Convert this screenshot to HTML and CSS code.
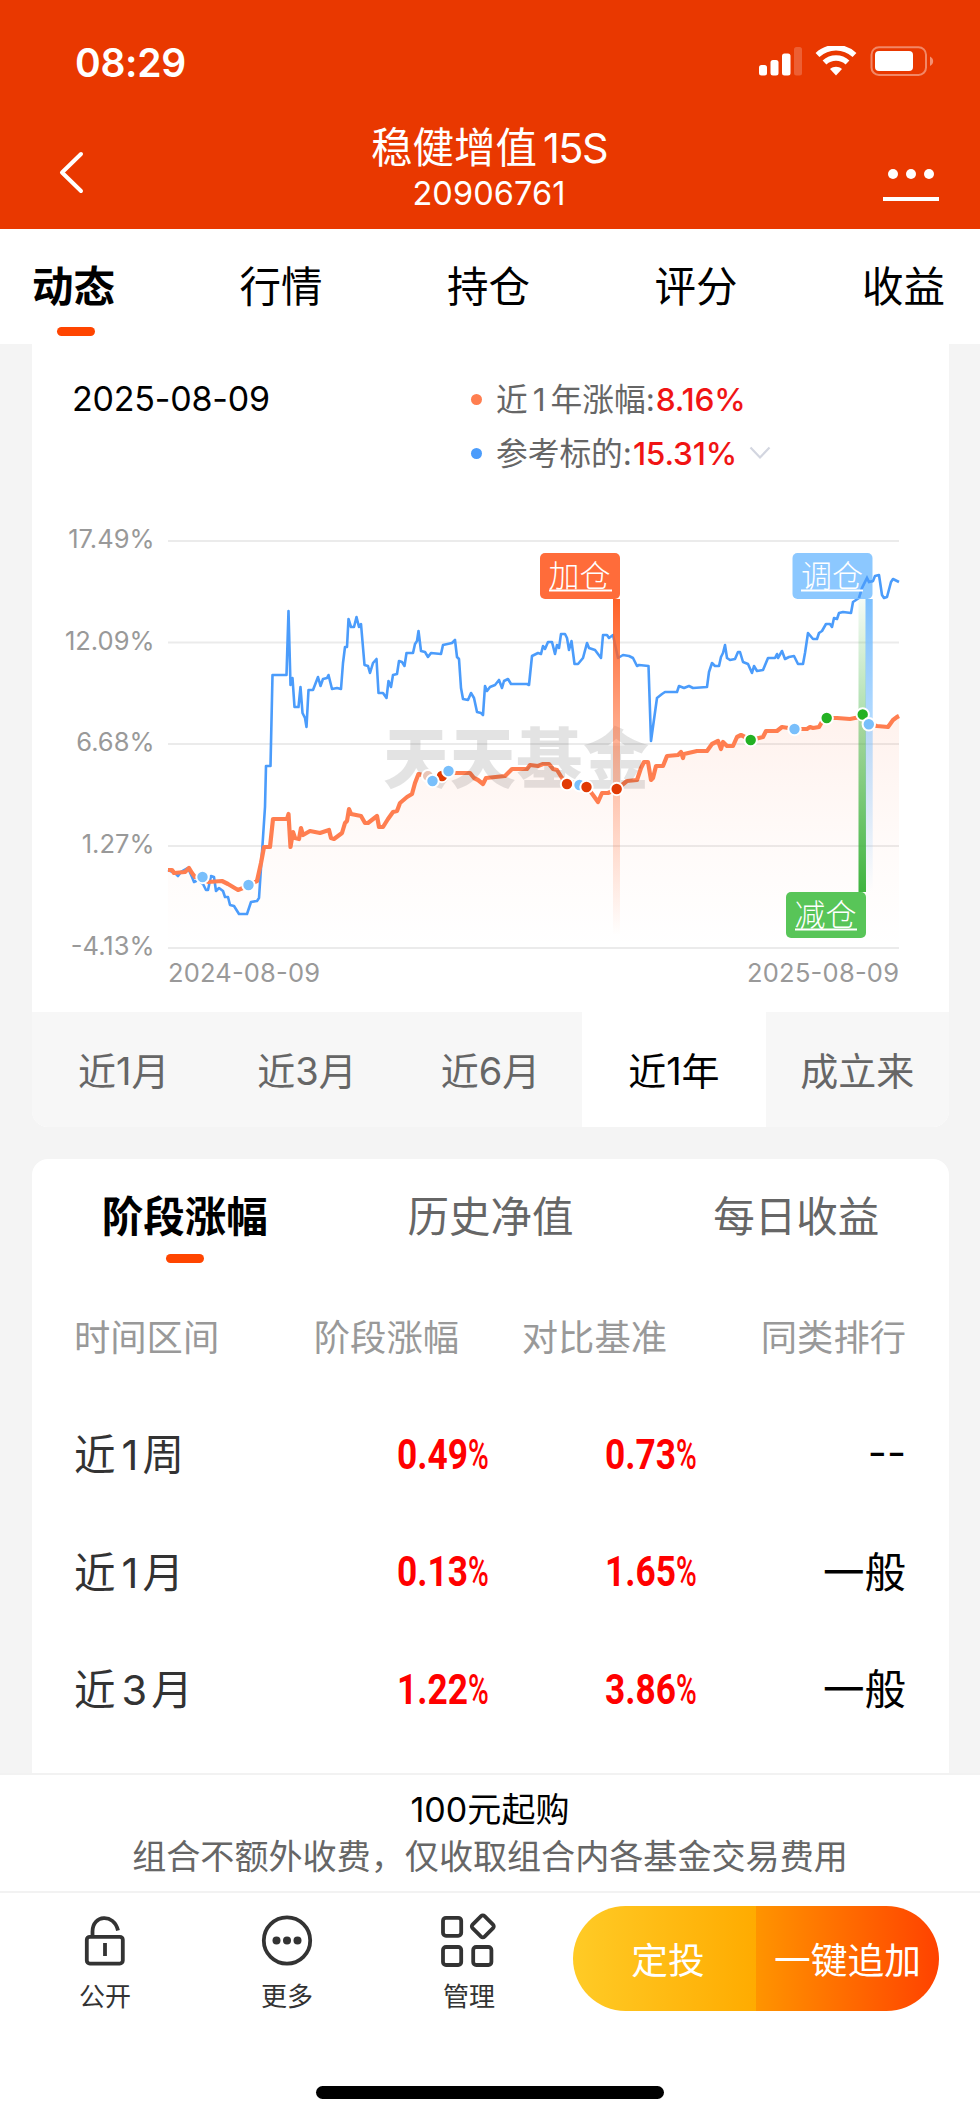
FILE: index.html
```
<!DOCTYPE html>
<html lang="zh-CN">
  <head>
    <meta charset="UTF-8" />
    <meta name="viewport" content="width=device-width, initial-scale=1.0" />
    <title>稳健增值15S</title>
    <link rel="stylesheet" href="styles.css">
  </head>
  <body>
    <header class="header">
      <div class="status-bar">
        <span class="time">08:29</span>
        <svg class="status-icons" width="176" height="32" viewBox="0 0 176 32" fill="#fff">
          <rect x="0" y="19" width="8" height="10.500" rx="2.500" />
          <rect x="11.500" y="14" width="8" height="15.500" rx="2.500" />
          <rect x="23" y="7.500" width="8.500" height="22" rx="2.500" />
          <rect x="35" y="1" width="8" height="28.500" rx="2.500" opacity="0.2" />
          <g fill="none" stroke="#fff" stroke-width="5.600">
            <path d="M58.500 9 C69 -0.800 85 -0.800 95.500 9" />
            <path d="M65.500 16.500 C72 10.500 82 10.500 88.500 16.500" />
          </g>
          <path d="M71 23 C74.500 20 79.500 20 83 23 L77 29.500 Z" />
          <rect x="112.500" y="1.200" width="54.500" height="27.800" rx="7.500" fill="none" stroke="#fff" stroke-width="2" opacity="0.4" />
          <rect x="116" y="5" width="38" height="20" rx="4" />
          <path d="M171 10.500 C175.200 12.500 175.200 18 171 20 Z" opacity="0.45" />
        </svg>
      </div>
      <div class="nav-bar">
        <svg class="back" width="30" height="48" viewBox="0 0 30 48">
          <path d="M27 6 L8 24.500 L27 43" fill="none" stroke="#fff" stroke-width="4" stroke-linecap="round" stroke-linejoin="round" />
        </svg>
        <div class="nav-title">
          <h1>稳健增值<span class="title-num">15S</span></h1>
          <p>20906761</p>
        </div>
        <div class="menu">
          <div class="menu-dots"><i></i><i></i><i></i></div>
        </div>
      </div>
    </header>

    <nav class="tabs">
      <a class="tab active">动态</a>
      <a class="tab">行情</a>
      <a class="tab">持仓</a>
      <a class="tab">评分</a>
      <a class="tab">收益</a>
    </nav>

    <main class="content">
      <section class="chart-card">
        <div class="chart-head">
          <div class="chart-date">2025-08-09</div>
          <div class="legend">
            <div class="legend-row">
              <i class="dot orange"></i>
              <span class="legend-text">近<span class="num">1</span>年涨幅:<b>8.16%</b></span>
            </div>
            <div class="legend-row">
              <i class="dot blue"></i>
              <span class="legend-text">参考标的:<b>15.31%</b></span>
              <svg class="chevron" width="22" height="14" viewBox="0 0 22 14">
                <path d="M1.500 1.500 L11 11.500 L20.500 1.500" fill="none" stroke="#d3d6e0" stroke-width="2.200" />
              </svg>
            </div>
          </div>
        </div>

        <svg class="chart" width="916" height="500" viewBox="32 512 916 500">
          <defs>
            <linearGradient id="area" gradientUnits="userSpaceOnUse" x1="0" y1="715" x2="0" y2="948">
              <stop offset="0" stop-color="#ff7e50" stop-opacity="0.1" />
              <stop offset="0.550" stop-color="#ff7e50" stop-opacity="0.035" />
              <stop offset="1" stop-color="#ff7e50" stop-opacity="0" />
            </linearGradient>
            <linearGradient id="poleRed" x1="0" y1="0" x2="0" y2="1">
              <stop offset="0" stop-color="#ff6127" />
              <stop offset="0.500" stop-color="#ff6127" stop-opacity="0.4" />
              <stop offset="1" stop-color="#ff6127" stop-opacity="0" />
            </linearGradient>
            <linearGradient id="poleBlue" x1="0" y1="0" x2="0" y2="1">
              <stop offset="0" stop-color="#7cc0ff" />
              <stop offset="1" stop-color="#7cc0ff" stop-opacity="0" />
            </linearGradient>
            <linearGradient id="poleGreen" x1="0" y1="0" x2="0" y2="1">
              <stop offset="0" stop-color="#3fb43f" stop-opacity="0.050" />
              <stop offset="1" stop-color="#3fb43f" />
            </linearGradient>
          </defs>

          <!-- rejilla -->
          <g stroke="#ebebeb" stroke-width="2">
            <path d="M168 541H899M168 642.500H899M168 744H899M168 846H899M168 948H899" />
          </g>
          <g class="axis" text-anchor="end">
            <text x="154.500" y="548">17.49%</text>
            <text x="154.500" y="649.500">12.09%</text>
            <text x="154.500" y="751">6.68%</text>
            <text x="154.500" y="853">1.27%</text>
            <text x="154.500" y="955">-4.13%</text>
          </g>
          <g class="axis">
            <text x="168" y="982" textLength="152">2024-08-09</text>
            <text x="747" y="982" textLength="152">2025-08-09</text>
          </g>

          <path fill="url(#area)" d="M168 870 L174 873 185 872 189 868 195 877 202 877 208 882 222 881 238 890 248 885 257 881 264 847 270 847 273 819 288 816 291 847 299 839 310 831 329 830 334 839 342 833 349 809 361 816 368 823 377 816 379 827 388 819 400 802 412 794 418 774 432 780 448 772 470 773 483 784 486 778 505 776 512 769 527 769 543 764 557 770 567 783 587 787 598 802 602 793 617 789 637 780 644 762 648 762 651 780 656 766 663 766 667 756 697 751 707 751 718 741 723 742 733 746 741 735 751 740 766 731 782 727 795 729 819 727 827 718 850 719 863 714 869 724 888 727 899 716 V948 H168 Z" />

          <polyline fill="none" stroke="#4b9cfb" stroke-width="2.600" stroke-linejoin="round" points="168,870 175,873 178,876 181,872 188,868 192,877 194,882 198,880 203,884 206,890 208,890 211,876 214,877 216,891 219,888 223,891 225,897 228,897 230,905 234,906 239,914 247,914 251,902 257,901 259,898 265,807 266,766 270.500,766 272.500,675 286.500,675 288.500,611 290.500,685 292.500,678 294.500,707 298.500,707 300.500,687 302.500,713 305,718 306.500,727 308.500,690 313,690 318,677 320.500,686 323,679 327,678 328.500,675 332,689 337,688 341,689 343,663 345,647 347,647 348.500,619 351,627 354,627 356.500,617 359,627 361,624 364.500,665 368,666 370,673 373,663 376.500,659 378.500,693 383,693 386.500,698 388.500,681 391,687 393,675 397,674 399,661 402,662 404.500,666 406.500,653 413,653 415,644 417,641 418.500,631 421,651 425,652 428,657 431,653 441,654 443,645 452,643 455,640 457,657 459,659 461,688 463,699 468,700 471,693 474,698 477,712 481,713 483,715 485,686 487,691 490,687 495,685 499,680 502,688 504,681 508,679 511,684 527,684 529,685 532,656 538,653 541,654 543,646 545,649 548,642 552,642 555,654 557,645 559,648 561,634 565,634 567,638 569,650 571.500,641 574.500,664 578,664 583,658 587,643 589,648 595,650 601,658 603,635 607,635 609,638 613,635 618,658 623,655 629,656 633,658 637,666 639,665 648.500,666 651,741 657,698 662,694 665,692 677,692 679,686 684,688 689,686 693,688 707,687 709,672 712,663 715,666 719,666 721,657 723,653 725,645 727,658 730,660 735,659 738,652 740,652 743,662 748,664 752,673 754,666 757,671 763,670 768,658 775,658 777,654 778,658 782,651 785,659 789,657 794,656 798,664 803,664 805,653 808,633 813,639 817,639 819,633 822,631 826,624 830,624 832,627 834,618 837,619 839,613 843,612 851,613 853,602 859,598 862,588 867,578 869,582 873,581 875,576 879,575 882,595 884,598 887,597 891,582 893,579 899,582" />

          <polyline fill="none" stroke="#ff7e50" stroke-width="4.200" stroke-linejoin="round" points="168,870 172,870 174,873 185,872 189,868 192,873 195,877 202,877 208,882 222,881 228,884 238,890 243,888 248,885 257,881 261,863 264,847 270,847 273,819 287,819 288.500,814 290.500,847 293,832 295,838 299,839 301,828 303,835 310,831 320,833 329,830 331,838 334,839 342,833 345,823 347,821 349,809 351,814 361,816 365,823 368,823 377,816 379,827 383,827 388,819 393,812 397,811 400,803 407,797 412,794 415,783 418.500,774 423,775 432,780 442,776 448,772 455,773 470,773 474,778 478,780 483,784 486,778 505,776 512,769 527,769 530,765 538,766 543,764 549,764 553,769 557,770 562,778 567,783 580,785 587,787 593,795 598,802 602,793 608,793 617,789 627,781 637,780 641,768 644,762 648,762 651,780 653,778 656,766 663,766 667,756 678,755 681,752 683,758 684,754 697,751 707,751 712,744 718,741 721,749 723,742 727,746 733,746 737,737 741,735 751,740 763,737 766,731 777,731 782,727 795,729 807,729 810,727 813,728 819,727 823,720 827,718 837,718 850,719 860,717 863,714 869,724 877,726 888,727 893,720 897,717 899,716" />

          <text class="watermark" x="383" y="783" textLength="266">天天基金</text>

          <rect x="613" y="599" width="7" height="336" fill="url(#poleRed)" />
          <rect x="858.500" y="599" width="7.500" height="293" fill="url(#poleGreen)" />
          <rect x="865.500" y="599" width="7.200" height="293" fill="url(#poleBlue)" />

          <g stroke="#fff" stroke-width="2">
            <circle cx="428" cy="776" r="6" fill="#e9c6b8" />
            <g fill="#e13a04">
              <circle cx="442" cy="776" r="6.200" />
              <circle cx="567" cy="784" r="6.200" />
            </g>
            <g fill="#79bffb">
              <circle cx="202.500" cy="877" r="6.200" />
              <circle cx="248.500" cy="885" r="6.200" />
              <circle cx="432.500" cy="781" r="6.200" />
              <circle cx="448.500" cy="771" r="6.200" />
              <circle cx="579.500" cy="785" r="6.200" />
              <circle cx="794.500" cy="729" r="6.200" />
            </g>
            <g fill="#e13a04">
              <circle cx="586.500" cy="787" r="6.200" />
              <circle cx="616.700" cy="789" r="6.200" />
            </g>
            <g fill="#23b123">
              <circle cx="750.700" cy="740" r="6.200" />
              <circle cx="826.700" cy="718" r="6.200" />
              <circle cx="862.700" cy="714.500" r="6.200" />
            </g>
            <circle cx="868.800" cy="724.300" r="6.200" fill="#79bffb" />
          </g>

          <rect x="540" y="553" width="80" height="46" rx="5" fill="#ff6c3a" />
          <rect x="792.500" y="553" width="80" height="46" rx="5" fill="#7cc0ff" fill-opacity="0.880" />
          <rect x="786" y="892" width="80" height="46" rx="5" fill="#58c558" />
          <path d="M859 598 L862 588 867 578 869 582 873 581" fill="none" stroke="#4b9cfb" stroke-width="2.600" />
          <g class="flag-text">
            <text x="548.500" y="587">加仓</text>
            <text x="801" y="587">调仓</text>
            <text x="794.500" y="926">减仓</text>
          </g>
          <path d="M549 590.500H612M801 590.500H863M795 929.500H857" stroke="#fff" stroke-width="2" />
        </svg>

        <div class="ranges">
          <a>近1月</a>
          <a>近3月</a>
          <a>近6月</a>
          <a class="active">近1年</a>
          <a>成立来</a>
        </div>
      </section>

      <section class="table-card">
        <div class="sub-tabs">
          <a class="active">阶段涨幅</a>
          <a>历史净值</a>
          <a>每日收益</a>
        </div>
        <div class="row head">
          <span>时间区间</span><span>阶段涨幅</span><span>对比基准</span><span>同类排行</span>
        </div>
        <div class="row">
          <span class="period">近<span class="num">1</span>周</span>
          <span class="rate">0.49<i>%</i></span>
          <span class="rate">0.73<i>%</i></span>
          <span class="rank">--</span>
        </div>
        <div class="row">
          <span class="period">近<span class="num">1</span>月</span>
          <span class="rate">0.13<i>%</i></span>
          <span class="rate">1.65<i>%</i></span>
          <span class="rank">一般</span>
        </div>
        <div class="row">
          <span class="period">近<span class="num">3</span>月</span>
          <span class="rate">1.22<i>%</i></span>
          <span class="rate">3.86<i>%</i></span>
          <span class="rank">一般</span>
        </div>
      </section>
    </main>

    <footer class="footer">
      <div class="notice">
        <p class="notice-main">100元起购</p>
        <p>组合不额外收费，仅收取组合内各基金交易费用</p>
      </div>
      <div class="actions">
        <a class="action">
          <svg width="60" height="60" viewBox="0 0 60 60" fill="none" stroke="#333" stroke-width="3.800">
            <rect x="11.800" y="27.800" width="36" height="26.800" rx="3" />
            <path d="M17.500 28 V22.500 C17.500 5.500 39 4 43 21.500" />
            <path d="M30 34 V47" />
          </svg>
          <span>公开</span>
        </a>
        <a class="action">
          <svg width="60" height="60" viewBox="0 0 60 60" fill="none" stroke="#333" stroke-width="3.800">
            <circle cx="30" cy="31.500" r="23.200" />
            <g fill="#333" stroke="none">
              <circle cx="19.500" cy="31.500" r="4" />
              <circle cx="30" cy="31.500" r="4" />
              <circle cx="40.500" cy="31.500" r="4" />
            </g>
          </svg>
          <span>更多</span>
        </a>
        <a class="action">
          <svg width="60" height="60" viewBox="0 0 60 60" fill="none" stroke="#333" stroke-width="3.800">
            <rect x="4" y="8.800" width="18.200" height="18" rx="3" />
            <rect x="4" y="38" width="18.200" height="18" rx="3" />
            <rect x="34.200" y="38" width="18.200" height="18" rx="3" />
            <rect x="35.300" y="8.800" width="17" height="17" rx="2.500" transform="rotate(45 43.800 17.300)" />
          </svg>
          <span>管理</span>
        </a>
        <div class="buttons">
          <button class="btn-plan">定投</button>
          <button class="btn-add">一键追加</button>
        </div>
      </div>
      <div class="home-bar"></div>
    </footer>
  </body>
</html>
```

FILE: styles.css
```
* {
  box-sizing: border-box;
}

body {
  width: 980px;
  height: 2120px;
  margin: 0;
  overflow: hidden;
  display: flex;
  flex-direction: column;
  background-color: #f4f4f4;
  color: #000;
  font-family: "Inter", "Noto Sans CJK SC", sans-serif;
}

h1,
p {
  margin: 0;
  font-weight: 400;
}

i {
  font-style: normal;
}

/* Header */
.header {
  height: 229px;
  background-color: #e93800;
  color: #fff;
}

.status-bar {
  display: flex;
  justify-content: space-between;
  align-items: center;
  height: 124px;
  padding: 0 46px 0 75px;
}

.time {
  font-size: 39px;
  font-weight: 600;
  letter-spacing: -0.3px;
}

.status-icons {
  width: 176px;
  margin-right: -1px;
}

.nav-bar {
  display: flex;
  justify-content: space-between;
  align-items: flex-start;
  height: 105px;
  padding: 0 41px 0 54px;
}

.back {
  margin-top: 24px;
  margin-right: 11px;
}

.nav-title {
  text-align: center;
}

.nav-title h1 {
  font-size: 41.5px;
  line-height: 47px;
  padding-top: 1px;
}

.title-num {
  margin-left: 6px;
  letter-spacing: -1.5px;
}

.nav-title p {
  font-size: 32.5px;
  line-height: 44px;
  letter-spacing: 0.1px;
}

.menu {
  width: 56px;
  height: 77px;
  border-bottom: 4px solid #fff;
  display: flex;
  align-items: flex-end;
  justify-content: center;
  padding-bottom: 18px;
}

.menu-dots {
  display: flex;
  gap: 8px;
}

.menu-dots i {
  width: 10px;
  height: 10px;
  border-radius: 50%;
  background-color: #fff;
}

/* Main tabs */
.tabs {
  display: flex;
  justify-content: space-between;
  height: 115px;
  padding: 0 35px 0 32px;
  background-color: #fff;
}

.tab {
  display: flex;
  flex-direction: column;
  align-items: center;
  font-size: 41.5px;
  line-height: 60px;
  padding-top: 28px;
}

.tab.active {
  font-weight: 700;
}

.tab.active::after,
.sub-tabs .active::after {
  content: "";
  width: 38px;
  height: 9px;
  border-radius: 5px;
  background-color: #ff4500;
}

.tab.active::after {
  margin: 10px 0 0 4px;
  align-self: center;
}

.content {
  height: 1429px;
  padding: 0 31px 0 32px;
  overflow: hidden;
}

/* Chart card */
.chart-card {
  background-color: #fff;
  border-radius: 0 0 16px 16px;
  overflow: hidden;
}

.chart-head {
  display: flex;
  height: 168px;
  padding-top: 28px;
}

.chart-date {
  width: 439px;
  padding-left: 40px;
  font-size: 34px;
  line-height: 54px;
  letter-spacing: -0.2px;
}

.legend-row {
  display: flex;
  align-items: center;
  height: 54px;
  color: #666;
  font-size: 31.7px;
}

.legend-text {
  padding-bottom: 4px;
}

.legend-row b {
  margin-left: 1px;
  color: #f01414;
  font-weight: 450;
  letter-spacing: -0.2px;
}

.num {
  margin: 0 5px;
}

.period .num {
  margin: 0 4px 0 6px;
}

.dot {
  width: 11px;
  height: 11px;
  margin-right: 14px;
  border-radius: 50%;
}

.orange {
  background-color: #ff7e50;
}

.blue {
  background-color: #4b9cfb;
}

.chevron {
  margin-left: 12px;
}

.chart {
  display: block;
}

.axis {
  font-size: 25.5px;
  fill: #999;
}

.flag-text {
  font-size: 31px;
  fill: #fff;
  font-weight: 300;
}

.watermark {
  font-size: 66px;
  font-weight: 900;
  fill: #000;
  fill-opacity: 0.11;
}

.ranges {
  display: grid;
  grid-template-columns: repeat(5, 1fr);
  height: 115px;
  background-color: #f7f7f7;
  color: #666;
  font-size: 38px;
  line-height: 118px;
  text-align: center;
}

.ranges .active {
  background-color: #fff;
  color: #000;
}

/* Table card */
.table-card {
  height: 640px;
  margin-top: 32px;
  background-color: #fff;
  border-radius: 16px;
}

.sub-tabs {
  display: grid;
  grid-template-columns: repeat(3, 1fr);
  height: 117px;
  color: #666;
  font-size: 41.5px;
  line-height: 60px;
}

.sub-tabs a {
  display: flex;
  flex-direction: column;
  align-items: center;
  padding-top: 28px;
}

.sub-tabs .active {
  color: #000;
  font-weight: 700;
}

.sub-tabs .active::after {
  margin-top: 7px;
}

.row {
  display: grid;
  grid-template-columns: 208px 207px 208px 1fr;
  align-items: center;
  height: 117.5px;
  padding: 0 43px 0 42px;
  font-size: 41.5px;
  color: #333;
}

.row.head {
  color: #999;
  font-size: 36.3px;
}

.head span:not(:first-child) {
  text-align: right;
}

.head span:nth-child(2),
.head span:nth-child(3) {
  padding-right: 30px;
}

.rate {
  padding-top: 4px;
  font-family: "Roboto", sans-serif;
  font-size: 42px;
  font-weight: 700;
  color: #f00;
  text-align: right;
  transform: scaleX(0.84);
  transform-origin: right;
}

.rate i {
  display: inline-block;
  width: 25px;
  font-weight: 500;
  transform: scaleX(0.8);
  transform-origin: left;
}

.rank {
  color: #000;
  text-align: right;
}

/* Footer */
.footer {
  flex: 1;
  background-color: #fff;
}

.notice {
  height: 120px;
  padding-top: 11px;
  border-top: 2px solid #f2f2f2;
  border-bottom: 2px solid #f2f2f2;
  text-align: center;
  color: #666;
  font-size: 34.1px;
  line-height: 47px;
}

.notice-main {
  color: #000;
}

.actions {
  display: flex;
  height: 193px;
  padding-left: 14px;
}

.action {
  display: flex;
  flex-direction: column;
  align-items: center;
  width: 182px;
  padding-top: 16px;
  color: #333;
  font-size: 26px;
  line-height: 36px;
}

.action span {
  margin-top: 10px;
}

.buttons {
  display: flex;
  width: 366px;
  height: 105px;
  margin: 13px 0 0 13px;
  border-radius: 53px;
  overflow: hidden;
}

.buttons button {
  width: 50%;
  padding: 0 0 2px;
  border: none;
  color: #fff;
  font-family: inherit;
  font-size: 36.7px;
  white-space: nowrap;
}

.buttons .btn-plan {
  padding-left: 7px;
  background: linear-gradient(to right, #ffcb26, #ffab00);
}

.btn-add {
  background: linear-gradient(to right, #ff9400, #ff4200);
}

.home-bar {
  width: 348px;
  height: 13px;
  margin: 0 auto;
  border-radius: 7px;
  background-color: #000;
}
```
